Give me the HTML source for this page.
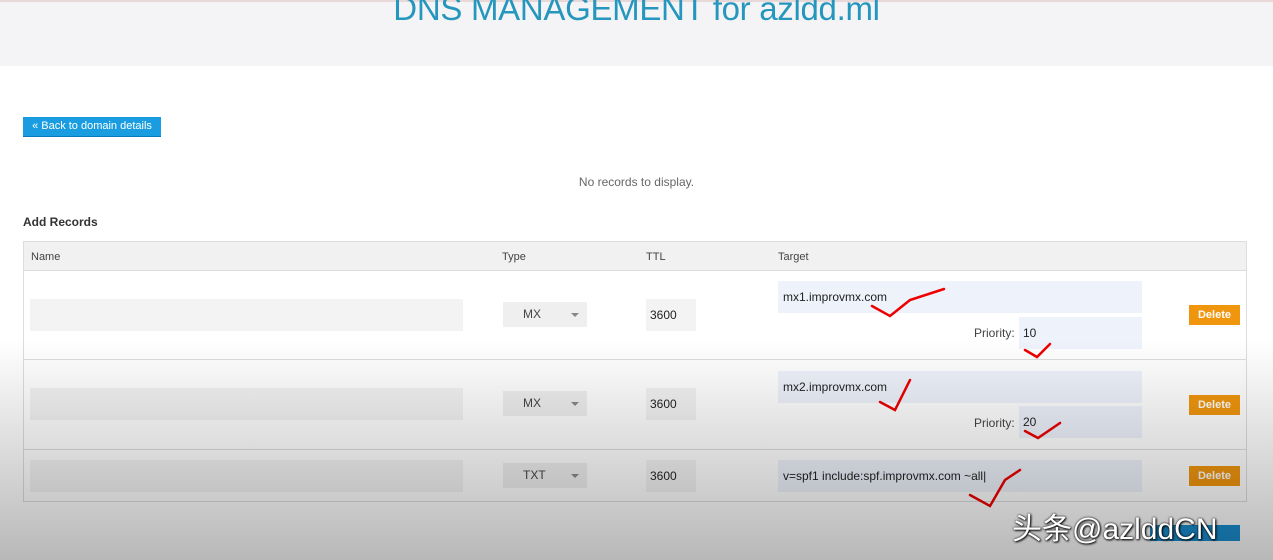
<!DOCTYPE html>
<html><head><meta charset="utf-8"><style>
body{margin:0;width:1273px;height:560px;overflow:hidden;background:#fff;font-family:"Liberation Sans",sans-serif;position:relative;color:#444}
.hdr{position:absolute;left:0;top:0;width:1273px;height:66px;background:#f4f4f6;border-top:2px solid #e8d8d8;box-sizing:border-box}
.title{position:absolute;left:0;width:1273px;top:-12px;text-align:center;font-size:33px;color:#2596bd;font-weight:normal;letter-spacing:-0.3px}
.btn{position:absolute;left:23px;top:117px;width:138px;height:19px;background:#1a9de0;color:#fff;font-size:11px;line-height:19px;text-align:center;border-bottom:1px solid #0a7ab8}
.abs{position:absolute}
.inp{position:absolute;background:#eef2fb}
.del{position:absolute;left:1189px;width:51px;height:20px;background:#f0960e;color:#fff;font-size:11px;font-weight:bold;line-height:20px;text-align:center}
.sel{position:absolute;left:503px;width:84px;height:25px;background:#efefef;font-size:12px;line-height:25px;text-indent:20px}
.sel:after{content:"";position:absolute;right:8px;top:11px;border:4px solid transparent;border-top-color:#888}
.t{font-size:12px;color:#222}
.vig{position:absolute;left:0;top:0;width:1273px;height:560px;background:linear-gradient(to bottom,rgba(0,0,0,0) 0,rgba(0,0,0,0) 340px,rgba(0,0,0,0.1) 420px,rgba(0,0,0,0.28) 560px);pointer-events:none}
</style></head><body>
<div class="hdr"><div class="title">DNS MANAGEMENT for azldd.ml</div></div>
<div class="btn">« Back to domain details</div>
<div class="abs" style="left:0;width:1273px;top:175px;text-align:center;font-size:12px;color:#666">No records to display.</div>
<div class="abs" style="left:23px;top:215px;font-size:12px;font-weight:bold;color:#333">Add Records</div>
<div class="abs" style="left:23px;top:241px;width:1224px;height:261px;border:1px solid #ddd;box-sizing:border-box"></div>
<div class="abs" style="left:24px;top:242px;width:1222px;height:28px;background:#f1f1f1;border-bottom:1px solid #ddd;font-size:11px;line-height:30px;color:#444">
<span class="abs" style="left:7px">Name</span><span class="abs" style="left:478px">Type</span><span class="abs" style="left:622px">TTL</span><span class="abs" style="left:754px">Target</span></div>
<div class="abs" style="left:24px;top:359px;width:1222px;height:1px;background:#ddd"></div>
<div class="abs" style="left:24px;top:449px;width:1222px;height:1px;background:#ddd"></div>
<div class="inp" style="left:30px;top:299px;width:433px;height:32px;background:#f3f3f3"></div>
<div class="sel" style="top:302px">MX</div>
<div class="inp t" style="left:646px;top:299px;width:50px;height:32px;background:#f3f3f3;line-height:32px;text-indent:4px">3600</div>
<div class="inp t" style="left:778px;top:281px;width:364px;height:32px;line-height:32px;text-indent:5px">mx1.improvmx.com</div>
<div class="abs t" style="left:974px;top:326px;color:#444">Priority:</div>
<div class="inp t" style="left:1019px;top:317px;width:123px;height:32px;line-height:32px;text-indent:4px">10</div>
<div class="del" style="top:305px">Delete</div>
<div class="inp" style="left:30px;top:388px;width:433px;height:32px;background:#f3f3f3"></div>
<div class="sel" style="top:391px">MX</div>
<div class="inp t" style="left:646px;top:388px;width:50px;height:32px;background:#f3f3f3;line-height:32px;text-indent:4px">3600</div>
<div class="inp t" style="left:778px;top:371px;width:364px;height:32px;line-height:32px;text-indent:5px">mx2.improvmx.com</div>
<div class="abs t" style="left:974px;top:416px;color:#444">Priority:</div>
<div class="inp t" style="left:1019px;top:406px;width:123px;height:32px;line-height:32px;text-indent:4px">20</div>
<div class="del" style="top:395px">Delete</div>
<div class="inp" style="left:30px;top:460px;width:433px;height:32px;background:#f3f3f3"></div>
<div class="sel" style="top:463px">TXT</div>
<div class="inp t" style="left:646px;top:460px;width:50px;height:32px;background:#f3f3f3;line-height:32px;text-indent:4px">3600</div>
<div class="inp t" style="left:778px;top:460px;width:364px;height:32px;line-height:32px;text-indent:5px">v=spf1 include:spf.improvmx.com ~all|</div>
<div class="del" style="top:466px">Delete</div>
<div class="abs" style="left:1150px;top:525px;width:90px;height:16px;background:#1a8fd0"></div>
<svg class="abs" style="left:0;top:0" width="1273" height="560"><g fill="none" stroke="#e00" stroke-width="2.5" stroke-linecap="round">
<path d="M872 306 L890 316 L910 300 L944 289"/><path d="M1025 350 L1037 357 L1050 344"/>
<path d="M880 402 L895 410 L910 380"/><path d="M1025 431 L1038 438 L1060 423"/>
<path d="M970 495 L990 506 L1005 480 L1020 470"/></g></svg>
<div class="vig"></div>
<div class="abs" style="left:1012px;top:504px;font-size:30px;color:#fff;font-family:'Liberation Sans','Noto Sans CJK SC',sans-serif;text-shadow:0 0 2px #000,1px 1px 2px #000">头条@azlddCN</div>
</body></html>
